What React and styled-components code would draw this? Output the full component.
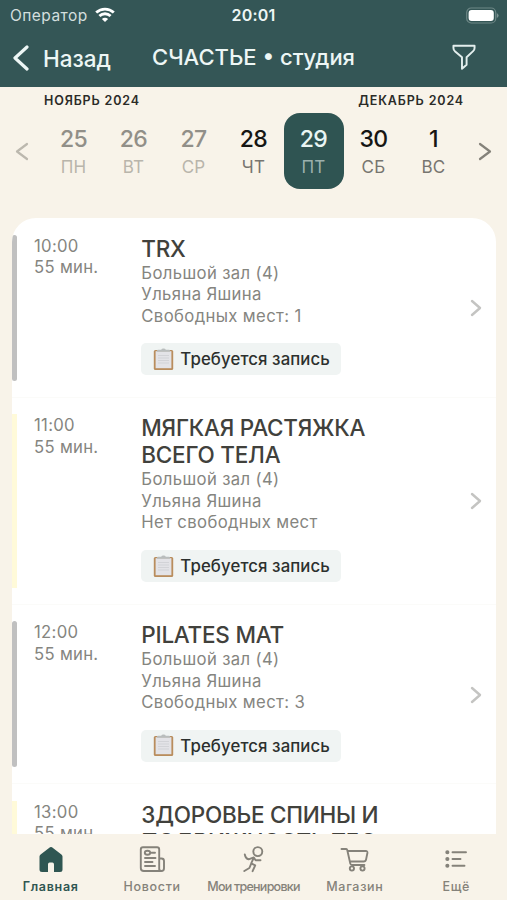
import React from 'react'
import styled, { createGlobalStyle } from 'styled-components'

const GlobalStyle = createGlobalStyle`
*{
  box-sizing: border-box;
}
body{
  margin: 0;
  background-color: #f8f3e9;
  font-family: Inter, Roboto, "Liberation Sans", sans-serif;
}
`
const Container = styled.div`
display: flex;
flex-direction: column;
width: 507px;
height: 900px;
overflow: hidden;
background-color: #f8f3e9;
`
const Header = styled.header`
flex: none;
height: 87px;
background-color: #345656;
color: #edf6f5;
`
const StatusBar = styled.div`
display: grid;
grid-template-columns: 1fr auto 1fr;
align-items: center;
height: 30px;
padding: 0 8px 0 10px;
`
const Operator = styled.div`
display: flex;
align-items: center;
gap: 7px;
font-size: 15.5px;
letter-spacing: 0.45px;
color: #d3dfde;
`
const Clock = styled.div`
margin-right: 2px;
font-size: 16px;
font-weight: 600;
letter-spacing: 0.2px;
`
const Battery = styled.svg`
justify-self: end;
`
const NavBar = styled.div`
display: grid;
grid-template-columns: 140px 1fr 140px;
align-items: center;
height: 57px;
padding: 0 0 1px;
`
const Back = styled.div`
display: flex;
align-items: center;
gap: 14px;
padding-left: 13px;
font-size: 22.5px;
font-weight: 500;
`
const Title = styled.h1`
margin: 0 0 2px;
text-align: center;
white-space: nowrap;
font-size: 22px;
font-weight: 500;
`
const FilterIcon = styled.svg`
justify-self: end;
margin: 0 31px 2px 0;
`
const Calendar = styled.section`
flex: none;
height: 131px;
padding: 5px 15px 0;
`
const Months = styled.div`
display: flex;
justify-content: space-between;
height: 21px;
padding: 0 28px 0 29px;
font-size: 12.5px;
line-height: 18px;
font-weight: 600;
letter-spacing: 0.85px;
color: #2b2b28;
`
const Week = styled.div`
display: flex;
align-items: center;
justify-content: space-between;
`
const Days = styled.div`
display: flex;
`
const Day = styled.div`
display: flex;
flex-direction: column;
align-items: center;
width: 60px;
height: 76px;
padding-top: 11px;
border-radius: 16px;
background-color: ${p => p.$state === 'selected' ? '#2f5452' : 'transparent'};
`
const DayNumber = styled.span`
font-size: 23px;
line-height: 30px;
font-weight: 500;
letter-spacing: -0.6px;
color: ${p => p.$state === 'past' ? '#918f88' : p.$state === 'selected' ? '#e9f5f3' : '#161614'};
`
const DayName = styled.span`
font-size: 17px;
line-height: 26px;
letter-spacing: 0.2px;
color: ${p => p.$state === 'past' ? '#b9b5ab' : p.$state === 'selected' ? '#9bb0ad' : '#77756f'};
`
const Schedule = styled.main`
flex: 1;
min-height: 0;
overflow: hidden;
margin: 0 11px 0 12px;
border-radius: 24px 24px 0 0;
background-color: #fff;
`
const Row = styled.article`
display: flex;
padding: 16.5px 0 16px;
border-bottom: 1px solid #fbfbf9;
`
const Mark = styled.div`
flex: none;
width: 5px;
border-radius: ${p => p.$full ? '0' : '3px'};
background-color: ${p => p.$full ? '#fffad9' : '#c0c0c0'};
`
const Time = styled.div`
flex: none;
width: 108px;
margin-left: 17px;
padding-top: 1px;
font-size: 16.7px;
line-height: 21.6px;
letter-spacing: 0.3px;
color: #85857f;
`
const Info = styled.div`
flex: 1;
padding-bottom: 5.5px;
margin-left: -0.7px;
`
const Name = styled.h2`
margin: 0 0 1px;
font-size: 22.5px;
line-height: 27px;
font-weight: 500;
letter-spacing: -0.25px;
white-space: pre-line;
color: #41413c;
`
const Detail = styled.div`
font-size: 16.7px;
line-height: 21.6px;
letter-spacing: 0.36px;
color: #85857f;
`
const Badge = styled.div`
display: inline-flex;
align-items: center;
gap: 6px;
width: 200px;
height: 32px;
margin-top: 16px;
padding-left: 12px;
border-radius: 5px;
background-color: #f0f4f3;
font-size: 16.8px;
font-weight: 500;
letter-spacing: 0.1px;
white-space: nowrap;
color: #2c302e;
vertical-align: top;
`
const Arrow = styled.div`
display: flex;
align-items: center;
padding: 1px 14px 0 0;
`
const TabBar = styled.nav`
display: flex;
flex: none;
height: 66px;
`
const Tab = styled.div`
display: flex;
flex: 1 1 0;
flex-direction: column;
align-items: center;
min-width: 0;
padding-top: 11px;
color: ${p => p.$active ? '#2f5652' : '#85827a'};
`
const TabLabel = styled.span`
margin-top: 3px;
font-size: 12.5px;
line-height: 18px;
font-weight: ${p => p.$active ? 600 : 500};
letter-spacing: ${p => p.$tight ? '-0.75px' : '0.7px'};
white-space: nowrap;
`

const days = [
  { number: 25, name: 'ПН', state: 'past' },
  { number: 26, name: 'ВТ', state: 'past' },
  { number: 27, name: 'СР', state: 'past' },
  { number: 28, name: 'ЧТ' },
  { number: 29, name: 'ПТ', state: 'selected' },
  { number: 30, name: 'СБ' },
  { number: 1, name: 'ВС' },
]

const lessons = [
  { time: '10:00', name: 'TRX', places: 'Свободных мест: 1' },
  { time: '11:00', name: 'МЯГКАЯ РАСТЯЖКА\nВСЕГО ТЕЛА', places: 'Нет свободных мест', full: true },
  { time: '12:00', name: 'PILATES MAT', places: 'Свободных мест: 3' },
  { time: '13:00', name: 'ЗДОРОВЬЕ СПИНЫ И\nПОДВИЖНОСТЬ ТБС', places: 'Нет свободных мест', full: true },
]

const Chevron = ({ left, width, height, color, stroke }) => (
  <svg width={width} height={height} viewBox={`0 0 ${width} ${height}`} fill="none" stroke={color} strokeWidth={stroke} strokeLinecap="round" strokeLinejoin="round">
    <path d={left
      ? `M${width - 2} 2L2 ${height / 2}L${width - 2} ${height - 2}`
      : `M2 2L${width - 2} ${height / 2}L2 ${height - 2}`} />
  </svg>
)

const Wifi = () => (
  <svg width="20" height="16" viewBox="0 0 20 16" fill="none" stroke="#fff" strokeWidth="2.8">
    <path d="M1.2 5.6C6.2 0.9 13.8 0.9 18.8 5.6" />
    <path d="M4.4 9C7.6 6 12.4 6 15.6 9" />
    <path d="M10 15L6.9 11.9C8.7 10.4 11.3 10.4 13.1 11.9Z" fill="#fff" stroke="none" />
  </svg>
)

const Clipboard = () => (
  <svg width="21" height="23" viewBox="0 0 21 23">
    <rect x="0.8" y="2" width="19.4" height="20" rx="1.5" fill="#b98d5d" />
    <rect x="2.6" y="3.2" width="15.8" height="17" fill="#e3e3e7" />
    <path d="M5 7.5h11M5 10h11M5 12.5h11M5 15h11" stroke="#d2d3d7" strokeWidth="1.2" />
    <path d="M4 3.8V2.5Q4 1.8 5 1.8H8.2Q8.6 0.6 10.5 0.6T12.8 1.8H16Q17 1.8 17 2.5V3.8Z" fill="#b9bdbd" />
  </svg>
)

const icons = {
  home: (
    <path d="M14 2.3Q15 1.6 16 2.3L25.4 9.4Q26.5 10.3 26.5 11.5V24.5Q26.5 27 24 27H18V19.5Q18 17.6 16.4 17.6H13.6Q12 17.6 12 19.5V27H6Q3.5 27 3.5 24.5V11.5Q3.5 10.3 4.6 9.4Z" fill="currentColor" stroke="none" />
  ),
  news: (
    <>
      <path d="M22.2 24.5V4.5Q22.2 2.3 20 2.3H6Q3.8 2.3 3.8 4.5V23Q3.8 26 6.8 26H24.3Q22.2 26 22.2 23.5M22.2 13.5H24.5Q27 13.5 27 16V23.2Q27 26 24.3 26" />
      <ellipse cx="10.5" cy="7.7" rx="2.7" ry="2" />
      <path d="M14.5 7.7H18M8 13H18.5M8 17H15.5M8 21H18" />
    </>
  ),
  runner: (
    <>
      <circle cx="18.8" cy="6.6" r="4.5" />
      <path d="M5.8 9.5Q6.6 13.6 9.6 14.3L14.8 12.4L16.6 15.2H21.5M14.6 13.2L12.2 18.4L16.2 20.4L13.6 26.2M12.2 18.6L10.4 23L5.3 26" />
    </>
  ),
  cart: (
    <>
      <path d="M1.5 4H6.3Q7 4 7.3 5.2L10.3 18.6Q10.6 20 12 20H24.4M7.6 6H25.7Q27.7 6 27.4 8L26.1 14.4Q25.7 16.5 23.6 16.5H9.9" />
      <circle cx="11.9" cy="23.5" r="2.1" />
      <circle cx="22.5" cy="23.5" r="2.1" />
    </>
  ),
  more: (
    <>
      <path d="M11.5 7.2H25M11.5 14H19.5M11.5 20.8H23.5" />
      <path d="M6.3 7.2h.1M6.3 14h.1M6.3 20.8h.1" strokeWidth="4" />
    </>
  ),
}

const tabs = [
  { icon: 'home', label: 'Главная', active: true },
  { icon: 'news', label: 'Новости' },
  { icon: 'runner', label: 'Мои тренировки', tight: true },
  { icon: 'cart', label: 'Магазин' },
  { icon: 'more', label: 'Ещё' },
]

export default function App() {
  return (
    <Container>
      <GlobalStyle />
      <Header>
        <StatusBar>
          <Operator>Оператор <Wifi /></Operator>
          <Clock>20:01</Clock>
          <Battery width="33" height="17" viewBox="0 0 33 17">
            <rect x="0.7" y="1" width="29" height="15" rx="4.5" fill="none" stroke="#6d8786" strokeWidth="1.2" />
            <rect x="2.6" y="3" width="25.2" height="11" rx="3" fill="#fff" />
            <path d="M30.8 6Q32.6 7 32.6 8.5T30.8 11Z" fill="#7a9291" />
          </Battery>
        </StatusBar>
        <NavBar>
          <Back>
            <Chevron left width={16} height={26} color="#edf6f5" stroke={3.2} />
            Назад
          </Back>
          <Title>СЧАСТЬЕ • студия</Title>
          <FilterIcon width="24" height="27" viewBox="0 0 25 28" fill="none" stroke="#e3eeed" strokeWidth="2" strokeLinejoin="round">
            <path d="M1.5 1.8H23.5V4Q23.5 6 22 7.4L15.2 13.8V21.5L10.4 25.8V13.8L3 7.4Q1.5 6 1.5 4Z" />
          </FilterIcon>
        </NavBar>
      </Header>
      <Calendar>
        <Months>
          <span>НОЯБРЬ 2024</span>
          <span>ДЕКАБРЬ 2024</span>
        </Months>
        <Week>
          <Chevron left width={14} height={19} color="#bcb8ae" stroke={2.2} />
          <Days>
            {days.map(day => (
              <Day key={day.number} $state={day.state}>
                <DayNumber $state={day.state}>{day.number}</DayNumber>
                <DayName $state={day.state}>{day.name}</DayName>
              </Day>
            ))}
          </Days>
          <Chevron width={14} height={19} color="#85827a" stroke={2.2} />
        </Week>
      </Calendar>
      <Schedule>
        {lessons.map(lesson => (
          <Row key={lesson.time}>
            <Mark $full={lesson.full} />
            <Time>
              <div>{lesson.time}</div>
              <div>55 мин.</div>
            </Time>
            <Info>
              <Name>{lesson.name}</Name>
              <Detail>Большой зал (4)</Detail>
              <Detail>Ульяна Яшина</Detail>
              <Detail>{lesson.places}</Detail>
              <Badge><Clipboard /> Требуется запись</Badge>
            </Info>
            <Arrow>
              <Chevron width={12} height={18} color="#c4c4c2" stroke={2.4} />
            </Arrow>
          </Row>
        ))}
      </Schedule>
      <TabBar>
        {tabs.map(tab => (
          <Tab key={tab.icon} $active={tab.active}>
            <svg width="30" height="30" viewBox="0 0 30 30" fill="none" stroke="currentColor" strokeWidth="1.9" strokeLinecap="round" strokeLinejoin="round">
              {icons[tab.icon]}
            </svg>
            <TabLabel $active={tab.active} $tight={tab.tight}>{tab.label}</TabLabel>
          </Tab>
        ))}
      </TabBar>
    </Container>
  )
}
